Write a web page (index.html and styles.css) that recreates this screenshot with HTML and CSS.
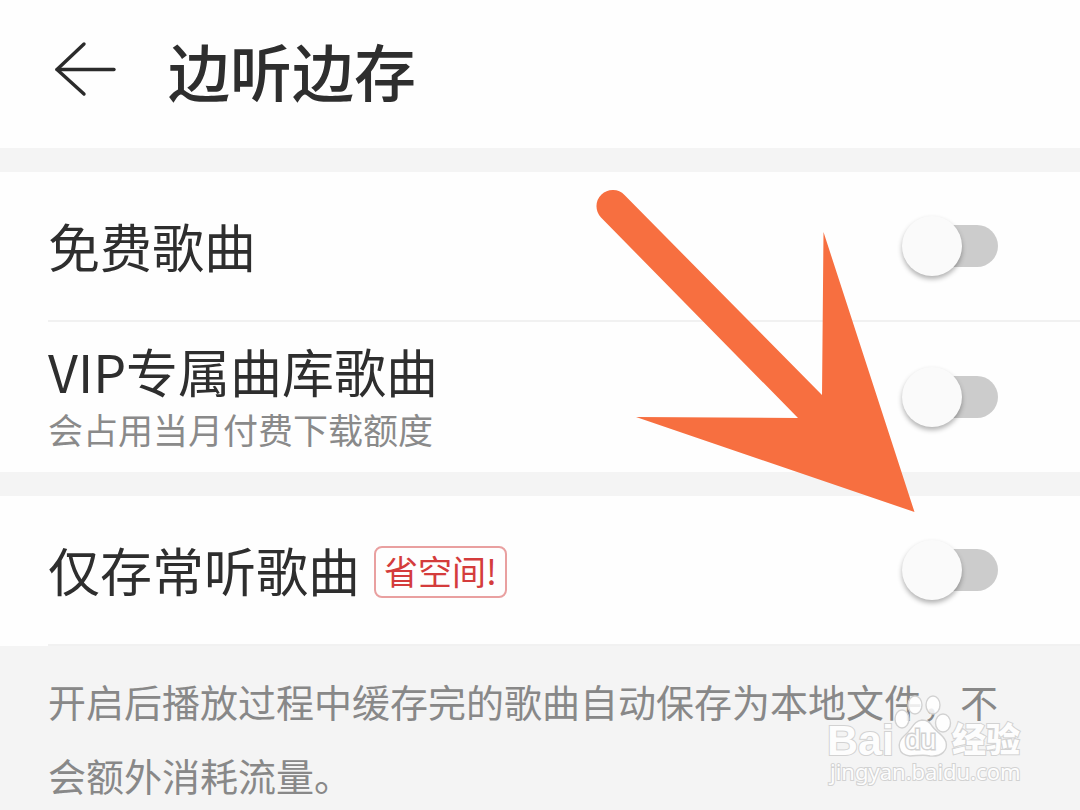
FILE: index.html
```html
<!DOCTYPE html>
<html lang="zh-CN">
  <head>
    <meta charset="UTF-8" />
    <meta name="viewport" content="width=device-width, initial-scale=1.0" />
    <title>边听边存</title>
    <link rel="stylesheet" href="styles.css">
  </head>
  <body>
    <div class="page">
      <header class="header">
        <button type="button" class="back" aria-label="返回">
          <svg width="64" height="60" viewBox="0 0 64 60" fill="none" stroke="#2b2b2b" stroke-width="3.4" stroke-linecap="round" stroke-linejoin="round">
            <path d="M32 4 L5 29.5 L32 54" />
            <path d="M5 29.5 H62" />
          </svg>
        </button>
        <h1>边听边存</h1>
      </header>

      <main>
        <section class="group">
          <div class="row row-line">
            <label class="row-title" for="freeSongs">免费歌曲</label>
            <input type="checkbox" role="switch" class="switch" id="freeSongs" />
          </div>
          <div class="row">
            <div class="row-text">
              <label class="row-title" for="vipSongs">VIP专属曲库歌曲</label>
              <p class="row-note">会占用当月付费下载额度</p>
            </div>
            <input type="checkbox" role="switch" class="switch" id="vipSongs" />
          </div>
        </section>

        <section class="group">
          <div class="row row-line">
            <div class="row-inline">
              <label class="row-title" for="oftenSongs">仅存常听歌曲</label>
              <span class="tag">省空间!</span>
            </div>
            <input type="checkbox" role="switch" class="switch" id="oftenSongs" />
          </div>
        </section>

        <p class="description">开启后播放过程中缓存完的歌曲自动保存为本地文件，不会额外消耗流量。</p>
      </main>

      <!-- pointer to the third switch -->
      <svg class="pointer" width="320" height="324" viewBox="0 0 320 324" fill="#f76f40">
        <path d="M28.5 6 L226 206 L227.5 43 L318.5 323 L40 228 L202 229 L5 28.5 A16.2 16.2 0 0 1 28.5 6 Z" />
      </svg>

      <!-- watermark -->
      <svg class="watermark" width="200" height="100" viewBox="0 0 200 100">
        <g fill="#fff" fill-opacity="0.85" stroke="#d2d2d2" stroke-width="1.4">
          <ellipse cx="78" cy="29" rx="7" ry="9" />
          <ellipse cx="91" cy="15" rx="7" ry="9" />
          <ellipse cx="109" cy="15" rx="7" ry="9" />
          <ellipse cx="119" cy="33" rx="7.5" ry="9" />
          <path d="M98 30 C89 31 88 40 80 46 C73 52 73 65 86 66 C93 66 99 64 106 66 C118 67 124 60 122 52 C120 45 112 42 108 36 C106 32 102 30 98 30 Z" />
        </g>
        <text class="mark-name" x="3" y="65">Bai</text>
        <text class="mark-du" x="81" y="59">du</text>
        <text class="mark-cn" x="128" y="62">经验</text>
        <text class="mark-url" x="6" y="90">jingyan.baidu.com</text>
      </svg>
    </div>
  </body>
</html>
```

FILE: styles.css
```css
* {
  box-sizing: border-box;
}
body {
  margin: 0;
  font-family: "Noto Sans CJK SC", sans-serif;
  background-color: #f4f4f4;
  color: #2e2e2e;
}
.page {
  position: relative;
  min-height: 100vh;
  overflow: hidden;
}
.header {
  display: flex;
  align-items: center;
  gap: 52px;
  height: 148px;
  padding: 0 52px 8px;
  background-color: #fefefe;
}
.back {
  display: flex;
  padding: 0;
  border: none;
  background: none;
  cursor: pointer;
}
h1 {
  margin: 0;
  font-size: 62px;
  font-weight: 500;
  line-height: 76px;
}
.group {
  margin-top: 24px;
  background-color: #fefefe;
}
.row {
  display: flex;
  align-items: center;
  justify-content: space-between;
  height: 150px;
  margin-left: 48px;
  padding-right: 82px;
}
.row-line {
  border-bottom: 2px solid #f1f1f1;
}
.row-inline {
  display: flex;
  align-items: center;
  gap: 14px;
}
.row-title {
  display: block;
  font-size: 52px;
  line-height: 64px;
}
.row-note {
  margin: 0;
  font-size: 35px;
  line-height: 52px;
  color: #8a8a8a;
}
.tag {
  margin-top: 4px;
  padding: 0 8px 2px;
  border: 2px solid #e9a0a0;
  border-radius: 8px;
  font-size: 34px;
  line-height: 46px;
  color: #d43c3c;
}
/* track with an oversized thumb */
.switch {
  appearance: none;
  display: flex;
  align-items: center;
  flex: none;
  width: 86px;
  height: 42px;
  margin: 0;
  border-radius: 21px;
  background-color: #cccccc;
  cursor: pointer;
}
.switch::before {
  content: "";
  flex: none;
  width: 60px;
  height: 60px;
  margin-left: -10px;
  border-radius: 50%;
  background-color: #fafafa;
  box-shadow: 0 3px 5px rgba(0, 0, 0, 0.3);
}
.switch:checked {
  justify-content: flex-end;
  background-color: #f0a0a0;
}
.description {
  margin: 0;
  padding: 18px 80px 0 48px;
  font-size: 38px;
  line-height: 74px;
  color: #888888;
}
.pointer {
  position: absolute;
  left: 596px;
  top: 189px;
  pointer-events: none;
}
.watermark {
  position: absolute;
  left: 824px;
  top: 690px;
  pointer-events: none;
}
.watermark text {
  fill: #fdfdfd;
  stroke: #d2d2d2;
  stroke-width: 2px;
  paint-order: stroke;
}
.watermark .mark-name {
  font-family: "Liberation Sans", sans-serif;
  font-size: 43px;
  font-weight: bold;
}
.watermark .mark-du {
  font-family: "Liberation Sans", sans-serif;
  font-size: 28px;
  stroke-width: 3px;
}
.watermark .mark-cn {
  font-size: 34px;
  font-weight: 900;
}
.watermark .mark-url {
  font-family: "Noto Sans", sans-serif;
  font-size: 22px;
}
```
